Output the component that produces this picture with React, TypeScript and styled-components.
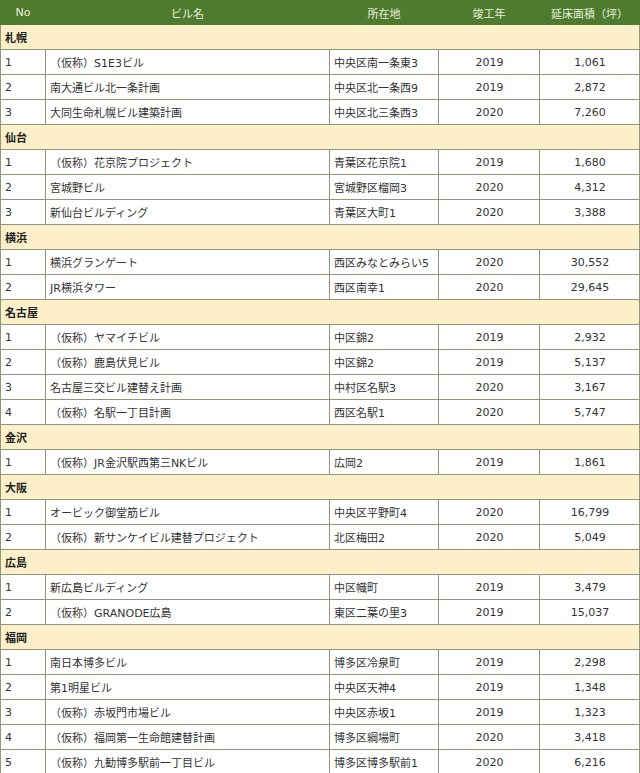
import { Fragment } from 'react';
import styled, { createGlobalStyle } from 'styled-components';

interface IBuilding {
  name: string;
  place: string;
  year: number;
  area: string;
}

interface IRegion {
  city: string;
  items: IBuilding[];
}

const regions: IRegion[] = [
  {
    city: '札幌',
    items: [
      { name: '（仮称）S1E3ビル', place: '中央区南一条東3', year: 2019, area: '1,061' },
      { name: '南大通ビル北一条計画', place: '中央区北一条西9', year: 2019, area: '2,872' },
      { name: '大同生命札幌ビル建築計画', place: '中央区北三条西3', year: 2020, area: '7,260' },
    ],
  },
  {
    city: '仙台',
    items: [
      { name: '（仮称）花京院プロジェクト', place: '青葉区花京院1', year: 2019, area: '1,680' },
      { name: '宮城野ビル', place: '宮城野区榴岡3', year: 2020, area: '4,312' },
      { name: '新仙台ビルディング', place: '青葉区大町1', year: 2020, area: '3,388' },
    ],
  },
  {
    city: '横浜',
    items: [
      { name: '横浜グランゲート', place: '西区みなとみらい5', year: 2020, area: '30,552' },
      { name: 'JR横浜タワー', place: '西区南幸1', year: 2020, area: '29,645' },
    ],
  },
  {
    city: '名古屋',
    items: [
      { name: '（仮称）ヤマイチビル', place: '中区錦2', year: 2019, area: '2,932' },
      { name: '（仮称）鹿島伏見ビル', place: '中区錦2', year: 2019, area: '5,137' },
      { name: '名古屋三交ビル建替え計画', place: '中村区名駅3', year: 2020, area: '3,167' },
      { name: '（仮称）名駅一丁目計画', place: '西区名駅1', year: 2020, area: '5,747' },
    ],
  },
  {
    city: '金沢',
    items: [
      { name: '（仮称）JR金沢駅西第三NKビル', place: '広岡2', year: 2019, area: '1,861' },
    ],
  },
  {
    city: '大阪',
    items: [
      { name: 'オービック御堂筋ビル', place: '中央区平野町4', year: 2020, area: '16,799' },
      { name: '（仮称）新サンケイビル建替プロジェクト', place: '北区梅田2', year: 2020, area: '5,049' },
    ],
  },
  {
    city: '広島',
    items: [
      { name: '新広島ビルディング', place: '中区幟町', year: 2019, area: '3,479' },
      { name: '（仮称）GRANODE広島', place: '東区二葉の里3', year: 2019, area: '15,037' },
    ],
  },
  {
    city: '福岡',
    items: [
      { name: '南日本博多ビル', place: '博多区冷泉町', year: 2019, area: '2,298' },
      { name: '第1明星ビル', place: '中央区天神4', year: 2019, area: '1,348' },
      { name: '（仮称）赤坂門市場ビル', place: '中央区赤坂1', year: 2019, area: '1,323' },
      { name: '（仮称）福岡第一生命館建替計画', place: '博多区綱場町', year: 2020, area: '3,418' },
      { name: '（仮称）九勧博多駅前一丁目ビル', place: '博多区博多駅前1', year: 2020, area: '6,216' },
    ],
  },
];

const App = () => {
  return (
    <>
      <GlobalStyle />
      <Table>
        <colgroup>
          <col style={{ width: 45 }} />
          <col style={{ width: 284 }} />
          <col style={{ width: 109 }} />
          <col style={{ width: 101 }} />
          <col />
        </colgroup>
        <thead>
          <tr>
            <HeadCell>No</HeadCell>
            <HeadCell>ビル名</HeadCell>
            <HeadCell>所在地</HeadCell>
            <HeadCell>竣工年</HeadCell>
            <HeadCell>延床面積（坪）</HeadCell>
          </tr>
        </thead>
        <tbody>
          {regions.map(({ city, items }) => (
            <Fragment key={city}>
              <tr>
                <RegionCell colSpan={5}>{city}</RegionCell>
              </tr>
              {items.map((item, i) => (
                <tr key={city + i}>
                  <Cell>{i + 1}</Cell>
                  <Cell>{item.name}</Cell>
                  <Cell>{item.place}</Cell>
                  <Cell $center>{item.year}</Cell>
                  <Cell $center>{item.area}</Cell>
                </tr>
              ))}
            </Fragment>
          ))}
        </tbody>
      </Table>
    </>
  );
};

export default App;

const GlobalStyle = createGlobalStyle`
  body {
    margin: 0;
    background: #fff;
    font-family: 'DejaVu Sans', 'Noto Sans CJK JP', sans-serif;
  }
`;

const Table = styled.table`
  width: 640px;
  table-layout: fixed;
  border-collapse: collapse;
  font-size: 11px;
  color: #333;
`;

const HeadCell = styled.th`
  height: 23px;
  padding: 0 4px;
  background-color: #4f7b2f;
  color: #e9f0df;
  font-weight: normal;
  text-align: center;
  border: 1px solid #4f7b2f;
  white-space: nowrap;
`;

const RegionCell = styled.td`
  height: 24px;
  padding: 0 4px;
  background-color: #fcefc9;
  font-weight: bold;
  color: #222;
  border: 1px solid #8e9879;
`;

const Cell = styled.td<{ $center?: boolean }>`
  height: 24px;
  padding: 0 3px 0 4px;
  text-align: ${({ $center }) => ($center ? 'center' : 'left')};
  border: 1px solid #8e9879;
  white-space: nowrap;
  overflow: hidden;
`;
